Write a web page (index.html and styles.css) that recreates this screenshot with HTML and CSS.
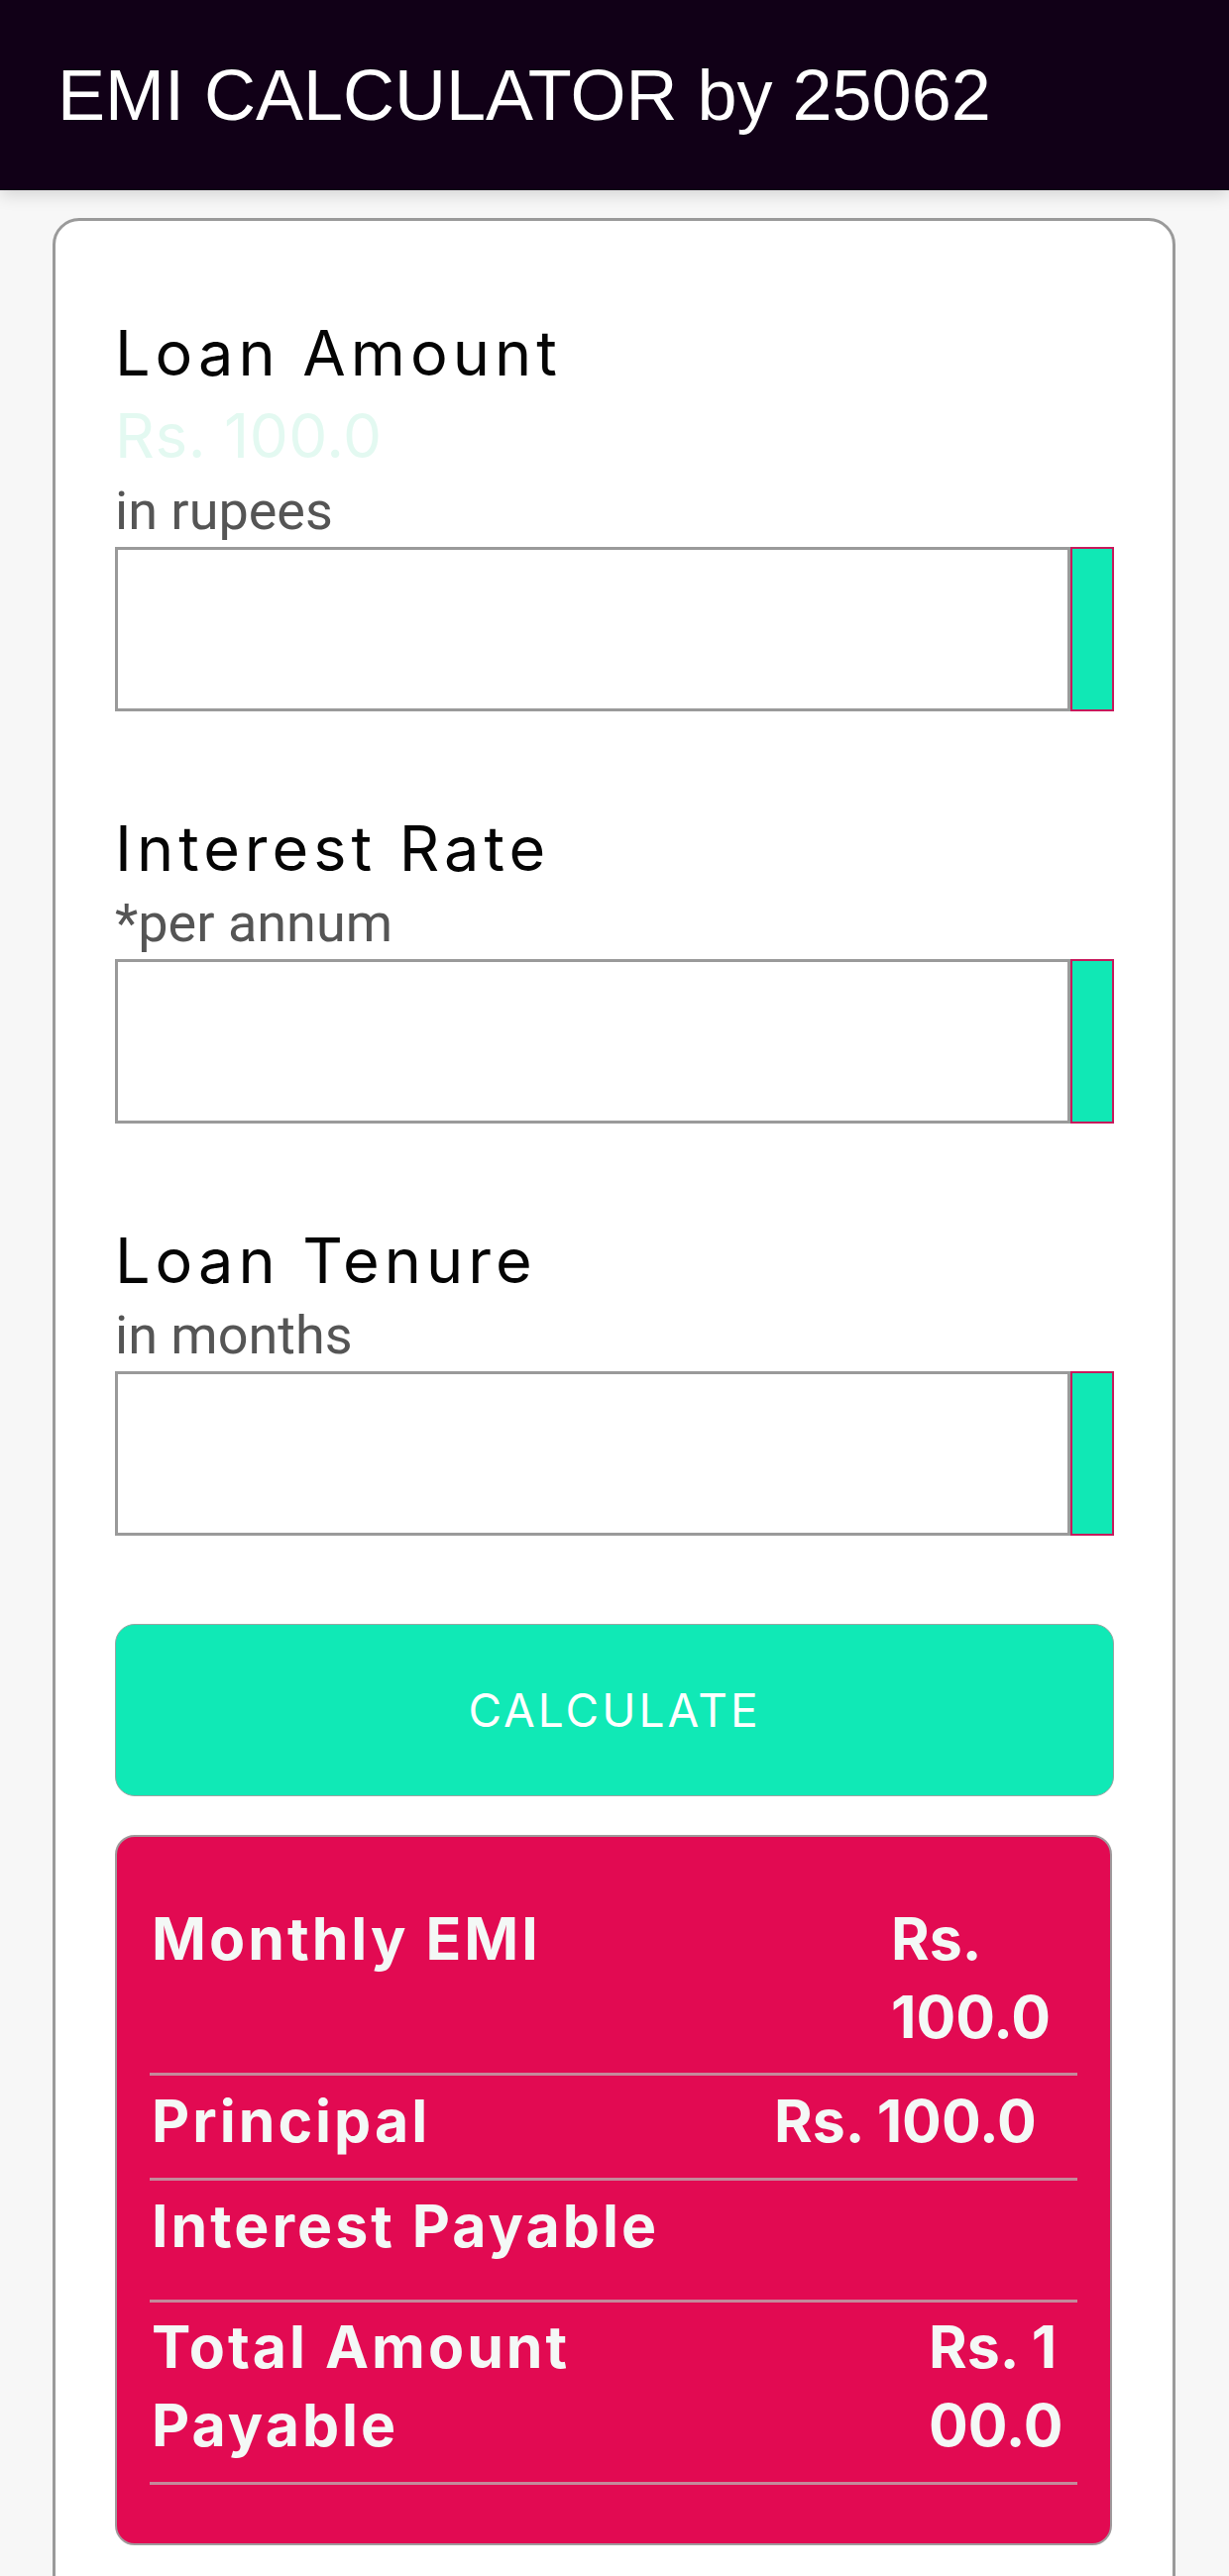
FILE: index.html
```html
<!DOCTYPE html>
<html lang="en">
<head>
<meta charset="utf-8">
<title>EMI CALCULATOR by 25062</title>
<link rel="stylesheet" href="styles.css">
</head>
<body>
<header class="appbar">
  <h1 class="appbar-title">EMI CALCULATOR by 25062</h1>
</header>
<main class="card">
  <section class="field">
    <div class="field-label">Loan Amount</div>
    <div class="field-amount">Rs. 100.0</div>
    <div class="field-hint">in rupees</div>
    <div class="field-input-row">
      <input class="field-input" type="text" aria-label="Loan Amount">
      <span class="field-btn"></span>
    </div>
  </section>
  <section class="field">
    <div class="field-label">Interest Rate</div>
    <div class="field-hint">*per annum</div>
    <div class="field-input-row">
      <input class="field-input" type="text" aria-label="Interest Rate">
      <span class="field-btn"></span>
    </div>
  </section>
  <section class="field">
    <div class="field-label">Loan Tenure</div>
    <div class="field-hint">in months</div>
    <div class="field-input-row">
      <input class="field-input" type="text" aria-label="Loan Tenure">
      <span class="field-btn"></span>
    </div>
  </section>
  <button class="calc-btn" type="button">CALCULATE</button>
  <div class="results">
    <div class="result-row row-emi">
      <span class="result-label">Monthly EMI</span>
      <span class="result-value value-emi">Rs. 100.0</span>
    </div>
    <div class="result-row row-principal">
      <span class="result-label">Principal</span>
      <span class="result-value value-principal">Rs. 100.0</span>
    </div>
    <div class="result-row row-interest">
      <span class="result-label">Interest Payable</span>
      <span class="result-value value-interest"></span>
    </div>
    <div class="result-row row-total">
      <span class="result-label">Total Amount Payable</span>
      <span class="result-value value-total">Rs. 100.0</span>
    </div>
  </div>
</main>
</body>
</html>
```

FILE: styles.css
```css
* {
  box-sizing: border-box;
}

html, body {
  margin: 0;
  padding: 0;
}

body {
  background: #f7f7f7;
  overflow: hidden;
}

.appbar {
  height: 192px;
  background: #110017;
  padding: 54px 0 0 58px;
  box-shadow: 0 5px 16px rgba(0, 0, 0, 0.14);
}

.appbar-title {
  margin: 0;
  font: 400 72px/84px "Liberation Sans", Arial, sans-serif;
  color: #ffffff;
  white-space: nowrap;
}

.card {
  display: block;
  margin: 28px 0 0 53px;
  width: 1133px;
  background: #ffffff;
  border: 3px solid #9a9a9a;
  border-radius: 27px;
  padding: 95px 59px 90px 60px;
}

.field + .field {
  margin-top: 100px;
}

.field-label {
  font: 400 63px/76px Inter, "Noto Sans", sans-serif;
  letter-spacing: 5px;
  color: #050505;
}

.field-amount {
  margin-top: 8px;
  font: 400 62px/76px Inter, "Noto Sans", sans-serif;
  letter-spacing: 0.5px;
  color: #e3f9f1;
}

.field-hint {
  margin-top: 8px;
  font: 400 54px/60px Roboto, "Liberation Sans", sans-serif;
  color: #555555;
}

.field-input-row {
  display: flex;
  margin-top: 6px;
  height: 166px;
}

.field-input {
  flex: 1;
  min-width: 0;
  height: 100%;
  margin: 0;
  padding: 0 16px;
  border: 3px solid #9a9a9a;
  border-radius: 0;
  background: #ffffff;
  outline: none;
  font: 400 52px Roboto, sans-serif;
}

.field-btn {
  width: 44px;
  height: 100%;
  background: #10e8b5;
  border: 2px solid #c71a5c;
}

.calc-btn {
  display: block;
  width: 100%;
  height: 174px;
  margin: 89px 0 0;
  padding: 0;
  background: #10e9b6;
  border: 1px solid #9aa5a2;
  border-radius: 20px;
  color: #ffffff;
  font: 400 46px Inter, "Noto Sans", sans-serif;
  letter-spacing: 3px;
}

.results {
  margin-top: 39px;
  width: 1006px;
  background: #e20a52;
  border: 2px solid #a09a9c;
  border-radius: 20px;
  padding: 63px 33px 59px;
}

.result-row {
  display: flex;
  justify-content: space-between;
  align-items: flex-start;
  border-bottom: 3px solid #c4899b;
  padding: 6px 0 18px;
  font: 700 59px/79px Inter, "Noto Sans", sans-serif;
  color: #f4f8f6;
}

.row-emi {
  padding: 0 0 17px;
}

.row-interest {
  padding-bottom: 35px;
}

.row-total {
  padding: 5px 0 18px;
}

.result-label {
  flex: 0 0 560px;
  padding-left: 2px;
  letter-spacing: 3px;
}

.result-value {
  flex: 0 0 auto;
}

.value-emi {
  width: 188px;
}

.value-principal {
  width: 306px;
}

.value-interest {
  width: 188px;
}

.value-total {
  width: 150px;
  word-break: break-all;
}
```
